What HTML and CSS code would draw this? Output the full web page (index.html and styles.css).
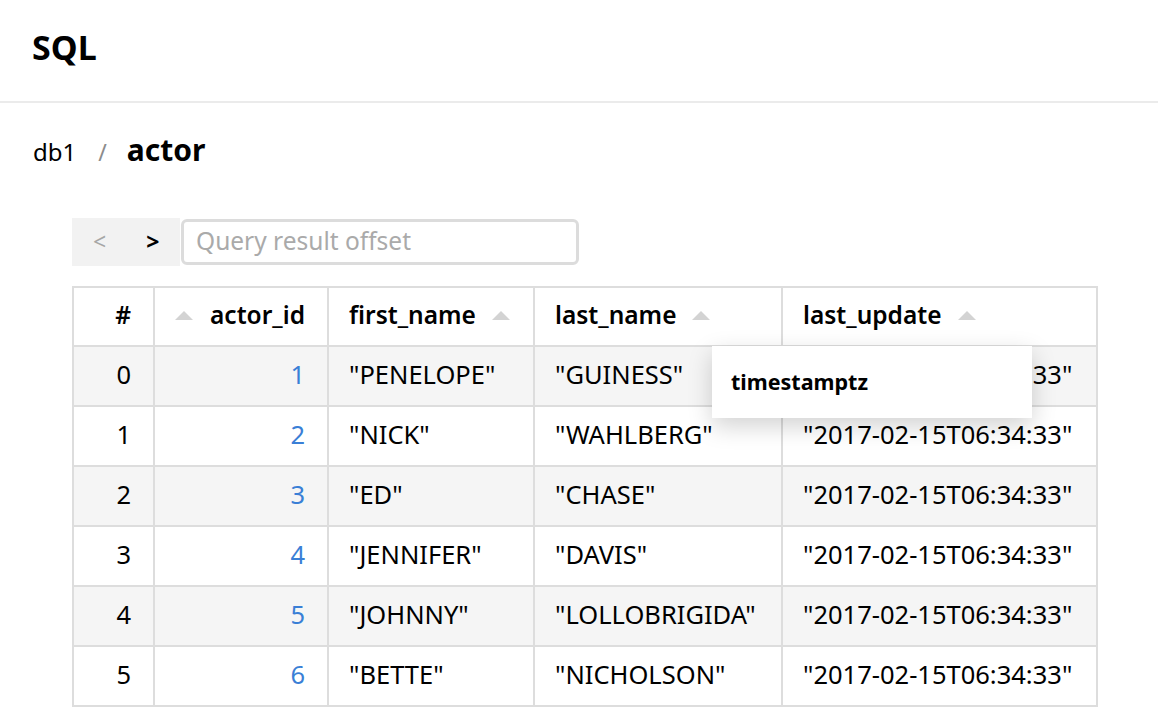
FILE: index.html
```html
<!DOCTYPE html>
<html>
<head>
<meta charset="utf-8">
<link rel="stylesheet" href="styles.css">
</head>
<body>
<header class="topbar"><h1 class="title">SQL</h1></header>
<main class="content">
  <div class="crumbs">
    <span class="crumb-db">db1</span>
    <span class="crumb-sep">/</span>
    <span class="crumb-table">actor</span>
  </div>
  <div class="pager">
    <div class="pager-buttons">
      <span class="pager-btn disabled">&lt;</span>
      <span class="pager-btn">&gt;</span>
    </div>
    <input class="pager-input" type="text" placeholder="Query result offset">
  </div>
  <div class="table-wrap">
    <table class="grid">
      <colgroup>
        <col class="c-idx"><col class="c-id"><col class="c-first"><col class="c-last"><col class="c-upd">
      </colgroup>
      <thead>
        <tr>
          <th class="num">#</th>
          <th class="num"><span class="sort"></span>actor_id</th>
          <th>first_name<span class="sort after"></span></th>
          <th>last_name<span class="sort after"></span></th>
          <th>last_update<span class="sort after"></span></th>
        </tr>
      </thead>
      <tbody>
        <tr class="odd"><td class="num">0</td><td class="num link">1</td><td>"PENELOPE"</td><td>"GUINESS"</td><td>"2017-02-15T06:34:33"</td></tr>
        <tr><td class="num">1</td><td class="num link">2</td><td>"NICK"</td><td>"WAHLBERG"</td><td>"2017-02-15T06:34:33"</td></tr>
        <tr class="odd"><td class="num">2</td><td class="num link">3</td><td>"ED"</td><td>"CHASE"</td><td>"2017-02-15T06:34:33"</td></tr>
        <tr><td class="num">3</td><td class="num link">4</td><td>"JENNIFER"</td><td>"DAVIS"</td><td>"2017-02-15T06:34:33"</td></tr>
        <tr class="odd"><td class="num">4</td><td class="num link">5</td><td>"JOHNNY"</td><td>"LOLLOBRIGIDA"</td><td>"2017-02-15T06:34:33"</td></tr>
        <tr><td class="num">5</td><td class="num link">6</td><td>"BETTE"</td><td>"NICHOLSON"</td><td>"2017-02-15T06:34:33"</td></tr>
      </tbody>
    </table>
    <div class="tooltip">timestamptz</div>
  </div>
</main>
</body>
</html>
```
FILE: styles.css
```css
html, body {
  margin: 0;
  padding: 0;
  background: #fff;
  color: #000;
  font-family: "Noto Sans", "Open Sans", sans-serif;
  overflow: hidden;
  height: 708px;
}

.topbar {
  height: 103px;
  border-bottom: 2px solid #ebebeb;
  display: flex;
  align-items: center;
  padding-left: 32px;
  box-sizing: border-box;
}

.title {
  margin: 0;
  font-size: 34px;
  font-weight: 700;
  line-height: 1;
  margin-top: -8px;
}

.content {
  padding: 0 0 0 33px;
}

.crumbs {
  display: flex;
  align-items: baseline;
  height: 96px;
  padding-top: 26px;
  box-sizing: border-box;
}

.crumb-db {
  font-size: 24px;
}

.crumb-sep {
  font-size: 23px;
  color: #8c8c8c;
  margin: 0 20px 0 22px;
}

.crumb-table {
  font-size: 30px;
  font-weight: 700;
}

.pager {
  display: flex;
  margin-left: 39px;
  margin-top: 19px;
  height: 48px;
}

.pager-buttons {
  display: flex;
  align-items: center;
  background: #f2f2f2;
  width: 108px;
  height: 48px;
  padding-left: 21px;
  padding-bottom: 3px;
  box-sizing: border-box;
  gap: 40px;
}

.pager-btn {
  font-size: 23px;
  font-weight: 700;
  color: #000;
}

.pager-btn.disabled {
  color: #a6a6a6;
  font-weight: 400;
}

.pager-input {
  margin: 1px 0 0 1px;
  width: 398px;
  height: 46px;
  box-sizing: border-box;
  border: 3px solid #dcdcdc;
  border-radius: 6px;
  padding: 0 12px 3px;
  font-family: "Noto Sans", sans-serif;
  font-size: 24.5px;
  outline: none;
}

.pager-input::placeholder {
  color: #aaa;
}

.table-wrap {
  position: relative;
  margin: 20px 0 0 39px;
  width: 1024px;
}

.grid {
  border-collapse: collapse;
  table-layout: fixed;
  width: 1024px;
  font-size: 25.5px;
}

.c-idx { width: 81px; }
.c-id { width: 174px; }
.c-first { width: 206px; }
.c-last { width: 248px; }
.c-upd { width: 315px; }

.grid th,
.grid td {
  border: 2px solid #dddddd;
  padding: 0 20px 4px;
  text-align: left;
  white-space: nowrap;
  overflow: hidden;
  box-sizing: border-box;
}

.grid th {
  height: 59px;
  font-weight: 600;
  font-size: 24.5px;
}

.grid td {
  height: 60px;
}

.grid .num {
  text-align: right;
  padding-right: 22px;
}

.grid tr.odd td {
  background: #f5f5f5;
}

.grid td.link {
  color: #3a7fd6;
}

.sort {
  display: inline-block;
  width: 0;
  height: 0;
  border-left: 9px solid transparent;
  border-right: 9px solid transparent;
  border-bottom: 9px solid #d3d3d3;
  vertical-align: middle;
  margin: -4px 17px 0 0;
}

.sort.after {
  margin: -4px 0 0 16px;
}

.tooltip {
  position: absolute;
  left: 640px;
  top: 60px;
  width: 320px;
  height: 72px;
  box-sizing: border-box;
  background: #fff;
  padding: 0 19px 2px;
  display: flex;
  align-items: center;
  font-size: 21.5px;
  font-weight: 700;
  box-shadow: 0 8px 24px rgba(0, 0, 0, 0.18);
}
```
